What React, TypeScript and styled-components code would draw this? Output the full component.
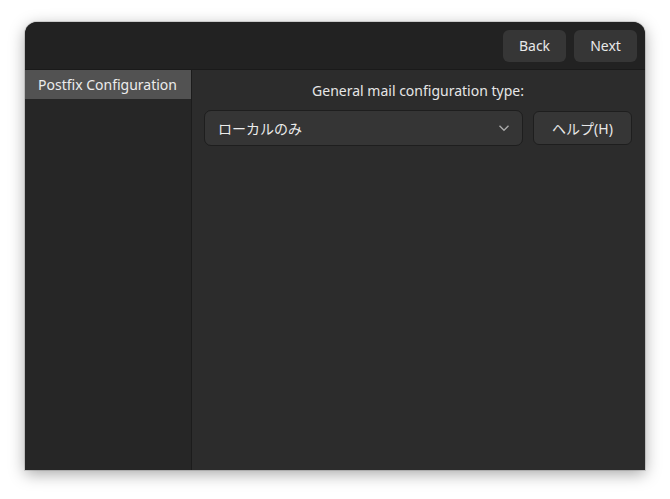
import * as React from 'react'
import styled, { createGlobalStyle } from 'styled-components'

const GlobalStyle = createGlobalStyle`
  html, body {
    margin: 0;
    padding: 0;
    background: #ffffff;
  }
  body {
    font-family: 'Noto Sans', 'Noto Sans CJK JP', sans-serif;
    font-size: 14px;
    color: #e6e6e6;
  }
`

const Page = styled.div`
  padding: 22px 25px 29px 25px;
`

const Window = styled.div`
  width: 620px;
  height: 448px;
  display: flex;
  flex-direction: column;
  border-radius: 12px 12px 0 0;
  overflow: hidden;
  background: #2c2c2c;
  box-shadow: 0 4px 16px rgba(0, 0, 0, 0.35), 0 0 0 1px rgba(0, 0, 0, 0.12);
`

const HeaderBar = styled.div`
  height: 47px;
  flex-shrink: 0;
  display: flex;
  align-items: center;
  justify-content: flex-end;
  gap: 8px;
  padding: 0 8px;
  background: #222222;
  border-bottom: 1px solid #1a1a1a;
`

const Button = styled.button<{ $w: number; $h?: number; $outlined?: boolean }>`
  width: ${(p) => p.$w}px;
  height: ${(p) => p.$h ?? 32}px;
  box-sizing: border-box;
  border: ${(p) => (p.$outlined ? '1px solid #1e1e1e' : 'none')};
  border-radius: 6px;
  background: #363636;
  color: #e8e8e8;
  font-family: inherit;
  font-size: 14px;
  padding: 0;
  display: flex;
  align-items: center;
  justify-content: center;
`

const Body = styled.div`
  flex: 1;
  display: flex;
`

const Sidebar = styled.div`
  width: 166px;
  flex-shrink: 0;
  background: #262626;
  border-right: 1px solid #1c1c1c;
`

const SideRow = styled.div<{ $active?: boolean }>`
  height: 29px;
  display: flex;
  align-items: center;
  padding-left: 13px;
  background: ${(p) => (p.$active ? '#525252' : 'transparent')};
  color: #ececec;
  white-space: nowrap;
`

const Content = styled.div`
  flex: 1;
  display: flex;
  flex-direction: column;
  padding: 10px 13px 0 12px;
`

const Label = styled.div`
  text-align: center;
  height: 22px;
  line-height: 22px;
  color: #e6e6e6;
  margin-bottom: 8px;
`

const Row = styled.div`
  display: flex;
  align-items: center;
  gap: 10px;
`

const Combo = styled.div`
  flex: 1;
  height: 36px;
  box-sizing: border-box;
  border: 1px solid #1e1e1e;
  border-radius: 7px;
  background: #353535;
  display: flex;
  align-items: center;
  justify-content: space-between;
  padding: 0 12px 0 13px;
  color: #ececec;
`

const Chevron = () => (
  <svg width="12" height="12" viewBox="0 0 12 12">
    <path d="M1.5 3.8 L6 8.2 L10.5 3.8" fill="none" stroke="#a8a8a8" strokeWidth="1.4" />
  </svg>
)

const App = () => {
  return (
    <Page>
      <GlobalStyle />
      <Window>
        <HeaderBar>
          <Button $w={63}>Back</Button>
          <Button $w={63}>Next</Button>
        </HeaderBar>
        <Body>
          <Sidebar>
            <SideRow $active>Postfix Configuration</SideRow>
          </Sidebar>
          <Content>
            <Label>General mail configuration type:</Label>
            <Row>
              <Combo>
                <span>ローカルのみ</span>
                <Chevron />
              </Combo>
              <Button $w={99} $h={34} $outlined>ヘルプ(H)</Button>
            </Row>
          </Content>
        </Body>
      </Window>
    </Page>
  )
}

export default App
